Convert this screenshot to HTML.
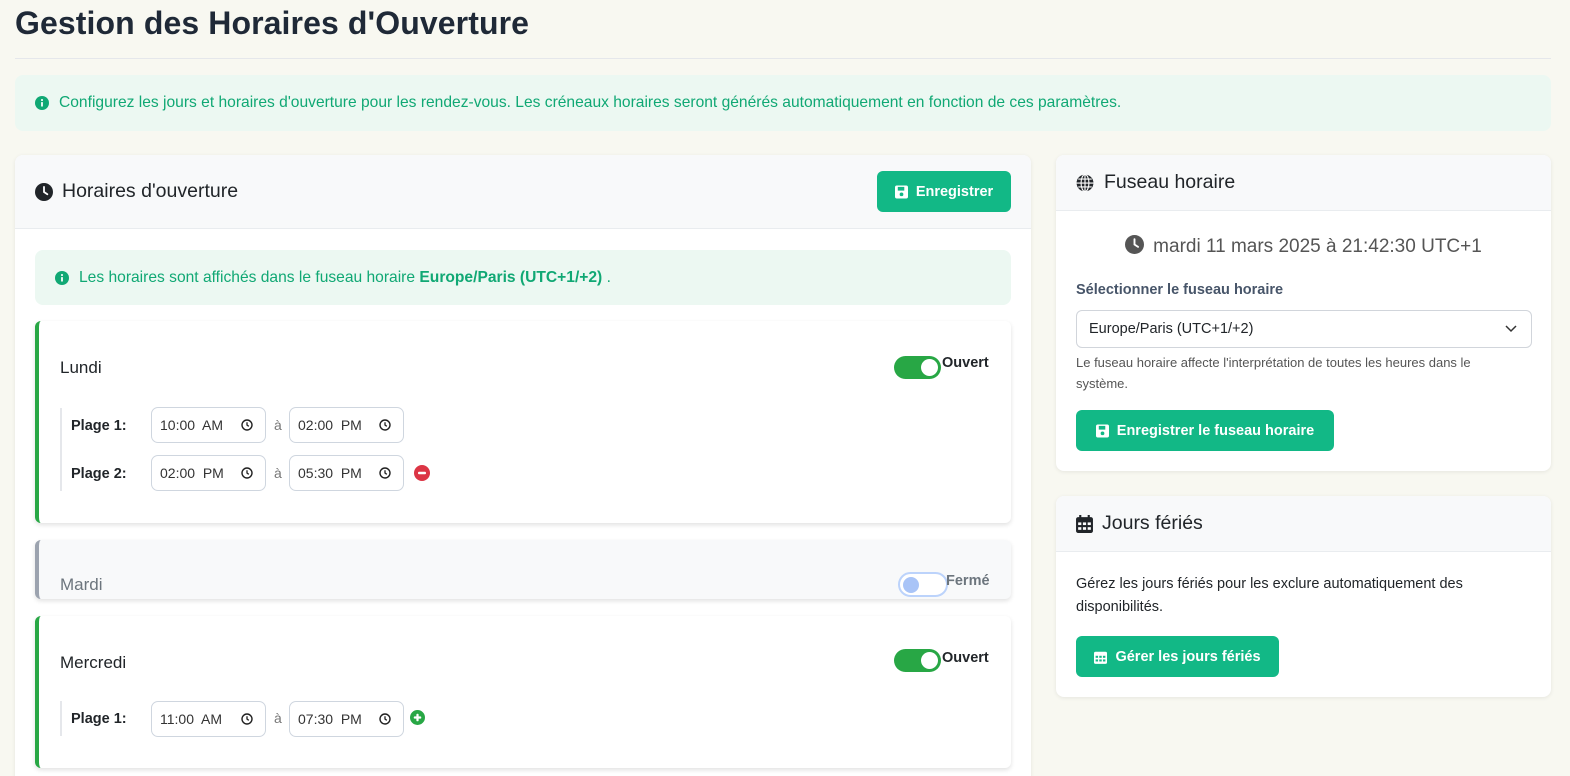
<!DOCTYPE html>
<html><head><meta charset="utf-8"><style>
*{box-sizing:border-box;margin:0;padding:0}
html,body{width:1570px;height:776px;overflow:hidden}
body{background:#f8f8f1;font-family:"Liberation Sans",sans-serif;color:#212529;position:relative}
.abs{position:absolute}
h1{position:absolute;left:15px;top:5px;font-size:32px;font-weight:bold;color:#1f2937;letter-spacing:0.1px}
.hr{left:15px;top:58px;width:1536px;height:1px;background:#e5e7eb}
.alert{background:#ecf8f2;color:#10a874;border-radius:8px;font-size:15.6px;display:flex;align-items:center}
.card{background:#fff;border-radius:8px;box-shadow:0 1px 4px rgba(0,0,0,.08);overflow:hidden}
.chead{background:#f8f9fa;border-bottom:1px solid #e9ecef;display:flex;align-items:center;padding:0 20px;font-size:19.5px;color:#212529}
.btn{background:#12b886;color:#fff;border-radius:6px;font-weight:bold;font-size:14.5px;display:flex;align-items:center;justify-content:center;gap:8px}
.day{background:#fff;border-radius:6px;border-left:4px solid #28a745;box-shadow:0 2px 5px rgba(0,0,0,.12)}
.dname{position:absolute;left:21px;font-size:17px;color:#212529}
.tog{position:absolute;width:47px;height:23px;border-radius:12px;background:#28a745}
.tog::after{content:"";position:absolute;right:3px;top:3px;width:17px;height:17px;border-radius:50%;background:#fff}
.tl{position:absolute;font-size:14.5px;font-weight:bold;color:#212529}
.inp{position:absolute;width:115px;height:36px;border:1px solid #cfd6df;border-radius:7px;font-size:14px;color:#333;padding:9px 0 0 8px;background:#fff}
.inp svg{position:absolute;right:12px;top:11px}
.a{position:absolute;font-size:14px;color:#777}
.lbl{font-size:14.5px;font-weight:bold}
</style></head><body>
<h1>Gestion des Horaires d'Ouverture</h1>
<div class="abs hr"></div>
<div class="abs alert" style="left:15px;top:75px;width:1536px;height:56px;padding-left:20px">
<svg width="14" height="14" viewBox="0 0 16 16" style="margin-right:10px"><circle cx="8" cy="8" r="8" fill="#10a874"/><rect x="7" y="7" width="2" height="5" fill="#fff"/><circle cx="8" cy="4.6" r="1.2" fill="#fff"/></svg>
Configurez les jours et horaires d'ouverture pour les rendez-vous. Les créneaux horaires seront générés automatiquement en fonction de ces paramètres.</div>

<div class="abs card" style="left:15px;top:155px;width:1016px;height:640px">
<div class="chead" style="height:74px">
<svg width="18" height="18" viewBox="0 0 16 16" style="margin-right:9px"><circle cx="8" cy="8" r="8" fill="#212529"/><path d="M8 3.5V8l3 2" stroke="#fff" stroke-width="1.6" fill="none" stroke-linecap="round"/></svg>Horaires d'ouverture</div>
<div class="abs btn" style="left:862px;top:16px;width:134px;height:41px"><svg width="13" height="14" viewBox="0 0 14 14"><rect x="0" y="0" width="14" height="14" rx="2" fill="#fff"/><rect x="3" y="1.5" width="7" height="4" fill="#12b886"/><circle cx="7" cy="9.5" r="2" fill="#12b886"/></svg>Enregistrer</div>
<div class="abs alert" style="left:20px;top:95px;width:976px;height:55px;padding-left:20px">
<svg width="14" height="14" viewBox="0 0 16 16" style="margin-right:10px"><circle cx="8" cy="8" r="8" fill="#10a874"/><rect x="7" y="7" width="2" height="5" fill="#fff"/><circle cx="8" cy="4.6" r="1.2" fill="#fff"/></svg>
Les horaires sont affichés dans le fuseau horaire&nbsp;<b>Europe/Paris (UTC+1/+2)</b>&nbsp;.</div>

<div class="abs day" style="left:20px;top:166px;width:976px;height:202px">
<div class="dname" style="top:37px">Lundi</div>
<div class="tog" style="left:855px;top:35px"></div>
<div class="abs lbl" style="left:903px;top:34px">Ouvert</div>
<div class="abs" style="left:21px;top:87px;width:2px;height:83px;background:#e5e7eb"></div>
<div class="tl" style="left:32px;top:97px">Plage 1:</div>
<div class="inp" style="left:112px;top:86px">10:00&nbsp; AM<svg width="12" height="12" viewBox="0 0 12 12"><circle cx="6" cy="6" r="5" stroke="#222" stroke-width="1.4" fill="none"/><path d="M6 3.2V6l1.8 1.3" stroke="#222" stroke-width="1.3" fill="none"/></svg></div>
<div class="a" style="left:235px;top:96px">à</div>
<div class="inp" style="left:250px;top:86px">02:00&nbsp; PM<svg width="12" height="12" viewBox="0 0 12 12"><circle cx="6" cy="6" r="5" stroke="#222" stroke-width="1.4" fill="none"/><path d="M6 3.2V6l1.8 1.3" stroke="#222" stroke-width="1.3" fill="none"/></svg></div>
<div class="tl" style="left:32px;top:145px">Plage 2:</div>
<div class="inp" style="left:112px;top:134px">02:00&nbsp; PM<svg width="12" height="12" viewBox="0 0 12 12"><circle cx="6" cy="6" r="5" stroke="#222" stroke-width="1.4" fill="none"/><path d="M6 3.2V6l1.8 1.3" stroke="#222" stroke-width="1.3" fill="none"/></svg></div>
<div class="a" style="left:235px;top:144px">à</div>
<div class="inp" style="left:250px;top:134px">05:30&nbsp; PM<svg width="12" height="12" viewBox="0 0 12 12"><circle cx="6" cy="6" r="5" stroke="#222" stroke-width="1.4" fill="none"/><path d="M6 3.2V6l1.8 1.3" stroke="#222" stroke-width="1.3" fill="none"/></svg></div>
<svg class="abs" style="left:375px;top:144px" width="16" height="16" viewBox="0 0 16 16"><circle cx="8" cy="8" r="8" fill="#dc3545"/><rect x="4" y="6.8" width="8" height="2.4" rx="1" fill="#fff"/></svg>
</div>

<div class="abs day" style="left:20px;top:385px;width:976px;height:59px;background:#f8f9fa;border-left-color:#9ca3af">
<div class="dname" style="top:35px;color:#6c757d">Mardi</div>
<div class="abs" style="left:859px;top:32px;width:50px;height:25px;border-radius:13px;background:#fff;border:2px solid #bcd3fb"><div style="position:absolute;left:3px;top:3px;width:16px;height:16px;border-radius:50%;background:#a9c4f7"></div></div>
<div class="abs lbl" style="left:907px;top:33px;color:#6c757d">Fermé</div>
</div>

<div class="abs day" style="left:20px;top:461px;width:976px;height:152px">
<div class="dname" style="top:37px">Mercredi</div>
<div class="tog" style="left:855px;top:33px"></div>
<div class="abs lbl" style="left:903px;top:34px">Ouvert</div>
<div class="abs" style="left:21px;top:85px;width:2px;height:35px;background:#e5e7eb"></div>
<div class="tl" style="left:32px;top:95px">Plage 1:</div>
<div class="inp" style="left:112px;top:85px">11:00&nbsp; AM<svg width="12" height="12" viewBox="0 0 12 12"><circle cx="6" cy="6" r="5" stroke="#222" stroke-width="1.4" fill="none"/><path d="M6 3.2V6l1.8 1.3" stroke="#222" stroke-width="1.3" fill="none"/></svg></div>
<div class="a" style="left:235px;top:94px">à</div>
<div class="inp" style="left:250px;top:85px">07:30&nbsp; PM<svg width="12" height="12" viewBox="0 0 12 12"><circle cx="6" cy="6" r="5" stroke="#222" stroke-width="1.4" fill="none"/><path d="M6 3.2V6l1.8 1.3" stroke="#222" stroke-width="1.3" fill="none"/></svg></div>
<svg class="abs" style="left:371px;top:94px" width="15" height="15" viewBox="0 0 16 16"><circle cx="8" cy="8" r="8" fill="#28a745"/><rect x="4" y="6.8" width="8" height="2.4" rx="1" fill="#fff"/><rect x="6.8" y="4" width="2.4" height="8" rx="1" fill="#fff"/></svg>
</div>
</div>

<div class="abs card" style="left:1056px;top:155px;width:495px;height:316px">
<div class="chead" style="height:56px"><svg width="18" height="18" viewBox="0 0 16 16" style="margin-right:10px"><circle cx="8" cy="8" r="7.5" fill="#212529"/><path d="M0.5 8h15M8 .5v15M2 4.5h12M2 11.5h12" stroke="#fff" stroke-width="1"/><ellipse cx="8" cy="8" rx="3.5" ry="7.5" stroke="#fff" stroke-width="1" fill="none"/></svg>Fuseau horaire</div>
<div class="abs" style="left:0;top:80px;width:495px;text-align:center;font-size:19px;color:#555"><svg width="19" height="19" viewBox="0 0 16 16" style="vertical-align:-2px;margin-right:9px"><circle cx="8" cy="8" r="8" fill="#555"/><path d="M8 3.5V8l3 2" stroke="#fff" stroke-width="1.6" fill="none" stroke-linecap="round"/></svg>mardi 11 mars 2025 à 21:42:30 UTC+1</div>
<div class="abs" style="left:20px;top:127px;font-size:14.5px;font-weight:bold;color:#475569">Sélectionner le fuseau horaire</div>
<div class="abs" style="left:20px;top:155px;width:456px;height:38px;border:1px solid #d1d5db;border-radius:6px;font-size:14.5px;padding:10px 12px">Europe/Paris (UTC+1/+2)<svg style="position:absolute;right:14px;top:14px" width="12" height="8" viewBox="0 0 12 8"><path d="M1 1l5 5 5-5" stroke="#333" stroke-width="1.5" fill="none"/></svg></div>
<div class="abs" style="left:20px;top:197px;width:430px;font-size:13px;line-height:21px;color:#555">Le fuseau horaire affecte l'interprétation de toutes les heures dans le système.</div>
<div class="abs btn" style="left:20px;top:255px;width:258px;height:41px"><svg width="13" height="14" viewBox="0 0 14 14"><rect width="14" height="14" rx="2" fill="#fff"/><rect x="3" y="1.5" width="7" height="4" fill="#12b886"/><circle cx="7" cy="9.5" r="2" fill="#12b886"/></svg>Enregistrer le fuseau horaire</div>
</div>

<div class="abs card" style="left:1056px;top:496px;width:495px;height:201px">
<div class="chead" style="height:56px"><svg width="17" height="18" viewBox="0 0 16 17" style="margin-right:9px"><rect x="0" y="2" width="16" height="15" rx="2" fill="#212529"/><rect x="3" y="0" width="2" height="4" fill="#212529"/><rect x="11" y="0" width="2" height="4" fill="#212529"/><g fill="#fff"><rect x="2" y="7" width="3" height="2.5"/><rect x="6.5" y="7" width="3" height="2.5"/><rect x="11" y="7" width="3" height="2.5"/><rect x="2" y="11.5" width="3" height="2.5"/><rect x="6.5" y="11.5" width="3" height="2.5"/><rect x="11" y="11.5" width="3" height="2.5"/></g></svg>Jours fériés</div>
<div class="abs" style="left:20px;top:77px;width:440px;font-size:14.5px;line-height:23px">Gérez les jours fériés pour les exclure automatiquement des disponibilités.</div>
<div class="abs btn" style="left:20px;top:140px;width:203px;height:41px"><svg width="13" height="14" viewBox="0 0 16 17"><rect x="0" y="2" width="16" height="15" rx="2" fill="#fff"/><g fill="#12b886"><rect x="2" y="7" width="3" height="2.5"/><rect x="6.5" y="7" width="3" height="2.5"/><rect x="11" y="7" width="3" height="2.5"/><rect x="2" y="11.5" width="3" height="2.5"/><rect x="6.5" y="11.5" width="3" height="2.5"/><rect x="11" y="11.5" width="3" height="2.5"/></g></svg>Gérer les jours fériés</div>
</div>
</body></html>
